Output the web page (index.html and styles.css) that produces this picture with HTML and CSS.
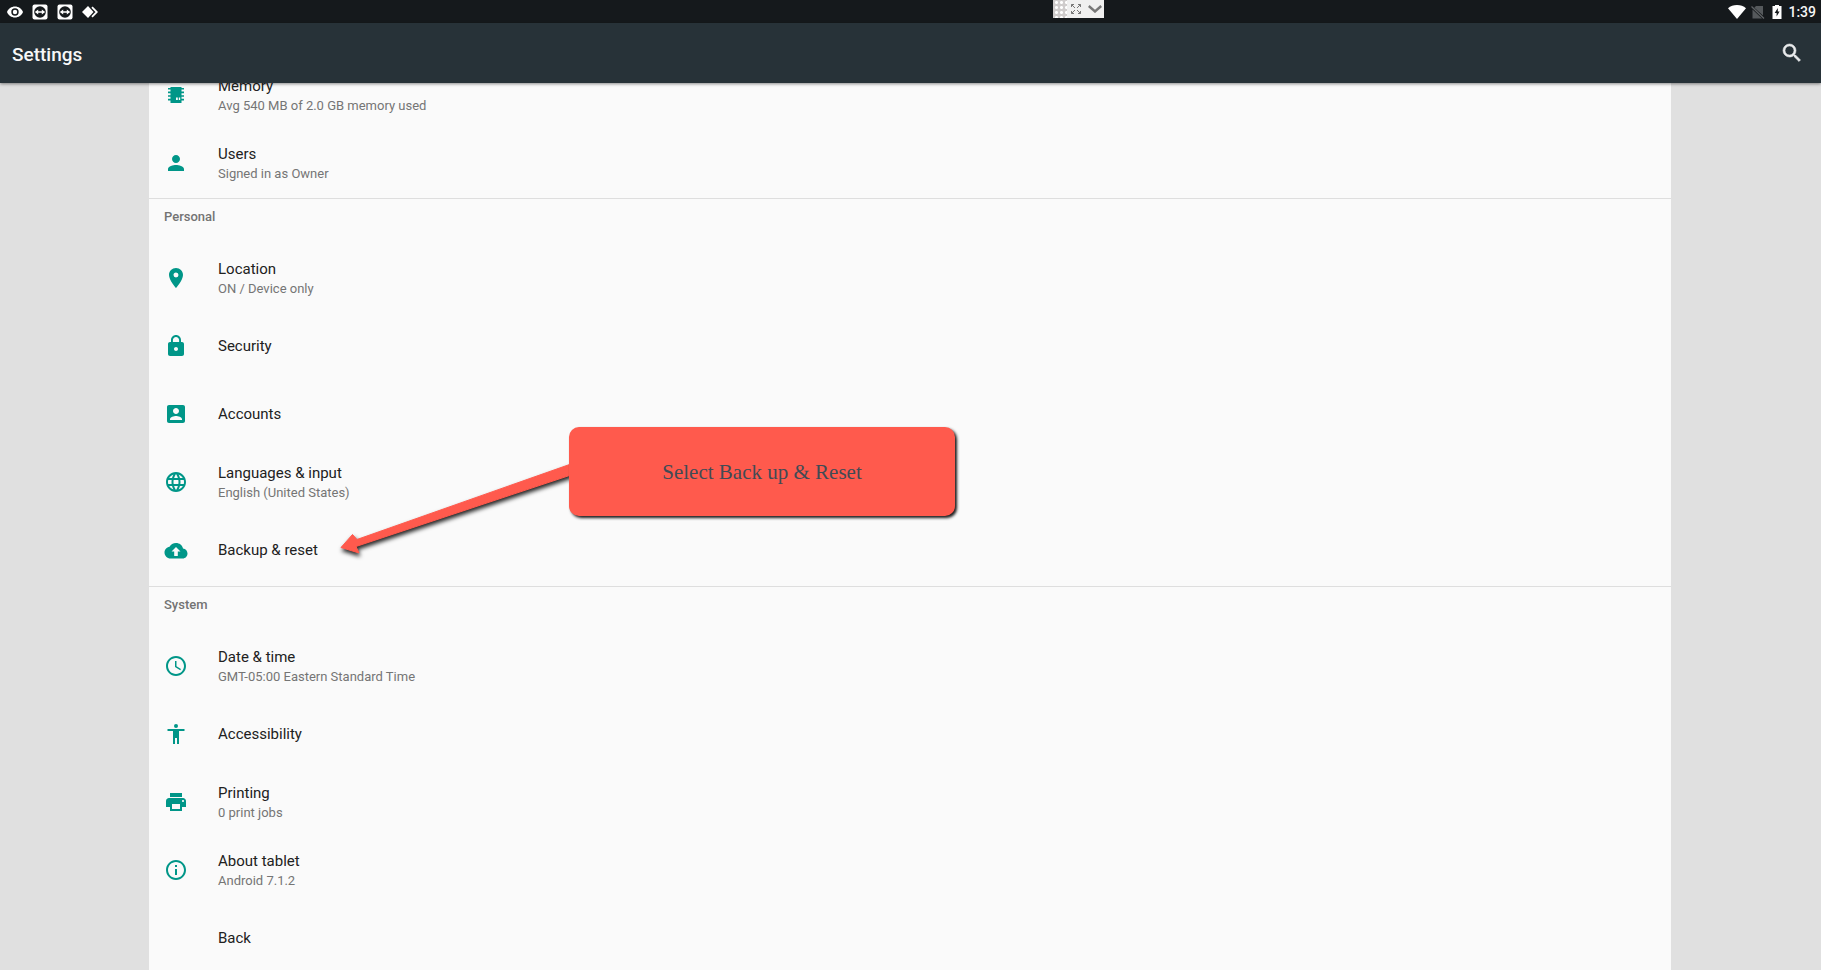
FILE: index.html
```html
<!DOCTYPE html>
<html lang="en">
<head>
<meta charset="utf-8">
<title>Settings</title>
<link rel="stylesheet" href="styles.css">
</head>
<body>
<div class="screen">
  <div class="status-bar">
    <div class="status-group notifications">
      <svg class="status-icon" viewBox="0 0 16 16"><path fill="#fff" fill-rule="evenodd" d="M8 2.5C4.4 2.5 1.3 4.700 0 8c1.300 3.300 4.400 5.500 8 5.500s6.700-2.200 8-5.500c-1.300-3.300-4.400-5.500-8-5.500zm0 9.200a3.700 3.700 0 1 1 0-7.400 3.700 3.700 0 0 1 0 7.400z"/><circle cx="8" cy="8" r="2.200" fill="#fff"/></svg>
      <svg class="status-icon" viewBox="0 0 16 16"><rect x=".5" y=".5" width="15" height="15" rx="2" fill="#fff"/><circle cx="8" cy="8" r="5.800" fill="#15191c"/><path fill="#fff" d="M2.800 8l3.400-2.600v1.800h3.600V5.400L13.200 8l-3.400 2.600V8.800H6.200v1.800z"/></svg>
      <svg class="status-icon" viewBox="0 0 16 16"><rect x=".5" y=".5" width="15" height="15" rx="2" fill="#fff"/><circle cx="8" cy="8" r="5.800" fill="#15191c"/><path fill="#fff" d="M2.800 8l3.400-2.600v1.800h3.600V5.400L13.200 8l-3.400 2.600V8.800H6.200v1.800z"/></svg>
      <svg class="status-icon" viewBox="0 0 16 16"><path fill="#fff" d="M6 2l5.500 6L6 14 0 8z"/><path fill="none" stroke="#fff" stroke-width="1.800" d="M10 3.200L14.800 8 10 12.800"/></svg>
    </div>
    <div class="status-group">
      <svg class="wifi" viewBox="0 0 18 14"><path fill="#fff" d="M9 14L0 3.200C2.400 1.200 5.500 0 9 0s6.600 1.200 9 3.200z"/></svg>
      <svg class="sim" viewBox="0 0 14 14"><path fill="#55595c" d="M5 1h7v9.500L3.300 2.700zM1.500 4.500L11 13.500H1.500z"/><path stroke="#606366" stroke-width="1.300" d="M.5 1.500l12.500 12"/></svg>
      <svg class="battery" viewBox="0 0 10 14"><path fill="#fff" d="M3 0h4v1h2.500v13H.5V1H3z"/><path fill="#15191c" d="M5.800 3L2.700 8h1.900v3.500l3-5H5.800z"/></svg>
      <time class="clock">1:39</time>
    </div>
    <div class="viewer-bar">
      <span class="grip"></span>
      <button class="viewer-button" aria-label="Full screen"><svg viewBox="0 0 10 10" width="10" height="10"><path fill="none" stroke="#777" d="M.5 3V.5H3M.5.5L4 4M7 .5h2.500V3M9.500.5L6 4M.5 7v2.500H3M.5 9.500L4 6M7 9.500h2.500V7M9.500 9.500L6 6"/></svg></button>
      <button class="viewer-button" aria-label="Expand"><svg viewBox="0 0 14 8" width="14" height="8"><path fill="none" stroke="#777" stroke-width="2.400" d="M.8 1L7 6.500 13.200 1"/></svg></button>
    </div>
  </div>

  <header class="app-bar">
    <h1 class="app-title">Settings</h1>
    <button class="search" aria-label="Search"><svg class="icon" viewBox="0 0 24 24"><path fill="#e9ebec" stroke="#e9ebec" stroke-width=".6" d="M15.500 14h-.79l-.28-.27A6.470 6.470 0 0 0 16 9.500 6.500 6.500 0 1 0 9.500 16c1.610 0 3.090-.59 4.230-1.570l.27.28v.79l5 4.990L20.490 19l-4.990-5zm-6 0C7.010 14 5 11.990 5 9.500S7.010 5 9.500 5 14 7.010 14 9.500 11.990 14 9.500 14z"/></svg></button>
  </header>

  <main class="content">
    <div class="list">
      <section class="section scrolled">
        <a class="row" href="#memory">
          <svg class="icon" viewBox="0 0 24 24"><path fill-rule="evenodd" d="M6.500 4h11v1H20v1.600h-2.500v2H20v1.600h-2.500v2H20v1.600h-2.500v2H20v1.600h-2.500V20h-11v-2.600H4v-1.600h2.500v-2H4v-1.600h2.500v-2H4V8.600h2.500v-2H4V5h2.500zM12 14.500v2.500h1.800v-2.500zm2.800 0v2.500h1.400v-2.500z"/></svg>
          <span class="label"><span class="title">Memory</span><span class="summary">Avg 540 MB of 2.0 GB memory used</span></span>
        </a>
        <a class="row" href="#users">
          <svg class="icon" viewBox="0 0 24 24"><path d="M12 12c2.210 0 4-1.790 4-4s-1.790-4-4-4-4 1.790-4 4 1.790 4 4 4zm0 2c-2.670 0-8 1.340-8 4v2h16v-2c0-2.660-5.330-4-8-4z"/></svg>
          <span class="label"><span class="title">Users</span><span class="summary">Signed in as Owner</span></span>
        </a>
      </section>

      <section class="section">
        <h2 class="section-title">Personal</h2>
        <a class="row" href="#location">
          <svg class="icon" viewBox="0 0 24 24"><path d="M12 2C8.130 2 5 5.130 5 9c0 5.250 7 13 7 13s7-7.750 7-13c0-3.870-3.130-7-7-7zm0 9.500a2.500 2.500 0 0 1 0-5 2.500 2.500 0 0 1 0 5z"/></svg>
          <span class="label"><span class="title">Location</span><span class="summary">ON / Device only</span></span>
        </a>
        <a class="row" href="#security">
          <svg class="icon" viewBox="0 0 24 24"><path d="M18 8h-1V6c0-2.760-2.240-5-5-5S7 3.240 7 6v2H6c-1.100 0-2 .9-2 2v10c0 1.100.9 2 2 2h12c1.100 0 2-.9 2-2V10c0-1.100-.9-2-2-2zm-6 9c-1.100 0-2-.9-2-2s.9-2 2-2 2 .9 2 2-.9 2-2 2zm3.100-9H8.900V6c0-1.710 1.390-3.100 3.100-3.100s3.100 1.390 3.100 3.100v2z"/></svg>
          <span class="label"><span class="title">Security</span></span>
        </a>
        <a class="row" href="#accounts">
          <svg class="icon" viewBox="0 0 24 24"><path d="M3 5v14c0 1.100.89 2 2 2h14c1.100 0 2-.9 2-2V5c0-1.100-.9-2-2-2H5c-1.110 0-2 .9-2 2zm12 4c0 1.660-1.340 3-3 3s-3-1.340-3-3 1.340-3 3-3 3 1.340 3 3zm-9 8c0-2 4-3.100 6-3.100s6 1.100 6 3.100v1H6v-1z"/></svg>
          <span class="label"><span class="title">Accounts</span></span>
        </a>
        <a class="row" href="#languages">
          <svg class="icon" viewBox="0 0 24 24"><path d="M11.990 2C6.470 2 2 6.480 2 12s4.470 10 9.990 10C17.520 22 22 17.520 22 12S17.520 2 11.990 2zm6.930 6h-2.950a15.650 15.650 0 0 0-1.380-3.560A8.030 8.030 0 0 1 18.920 8zM12 4.040c.83 1.200 1.480 2.530 1.910 3.960h-3.820c.43-1.430 1.080-2.760 1.910-3.960zM4.260 14C4.100 13.360 4 12.690 4 12s.1-1.360.26-2h3.380c-.08.66-.14 1.320-.14 2s.06 1.340.14 2H4.260zm.82 2h2.950c.32 1.250.78 2.450 1.380 3.560A7.987 7.987 0 0 1 5.080 16zm2.950-8H5.080a7.987 7.987 0 0 1 4.330-3.560A15.650 15.650 0 0 0 8.030 8zM12 19.960c-.83-1.200-1.480-2.530-1.910-3.960h3.820c-.43 1.430-1.080 2.760-1.910 3.960zM14.340 14H9.660c-.09-.66-.16-1.320-.16-2s.07-1.350.16-2h4.680c.09.65.16 1.320.16 2s-.07 1.340-.16 2zm.25 5.560c.6-1.110 1.060-2.310 1.380-3.560h2.950a8.030 8.030 0 0 1-4.330 3.560zM16.360 14c.08-.66.14-1.320.14-2s-.06-1.340-.14-2h3.380c.16.640.26 1.310.26 2s-.1 1.360-.26 2h-3.380z"/></svg>
          <span class="label"><span class="title">Languages &amp; input</span><span class="summary">English (United States)</span></span>
        </a>
        <a class="row" href="#backup">
          <svg class="icon" viewBox="0 0 24 24"><path fill-rule="evenodd" d="M19 10.500C18.300 7.200 15.500 5 12 5 9.200 5 6.700 6.500 5.500 8.800 2.700 9.200.5 11.700.5 14.600c0 3.300 2.700 6 6 6h12.200c2.700 0 4.800-2.200 4.800-5 0-2.700-2-4.900-4.500-5.100zM13.800 13.500V18h-3.600v-4.500H7.500L12 9l4.500 4.500z"/></svg>
          <span class="label"><span class="title">Backup &amp; reset</span></span>
        </a>
      </section>

      <section class="section">
        <h2 class="section-title">System</h2>
        <a class="row" href="#date">
          <svg class="icon" viewBox="0 0 24 24"><path d="M11.990 2C6.470 2 2 6.480 2 12s4.470 10 9.990 10C17.520 22 22 17.520 22 12S17.520 2 11.990 2zM12 20c-4.420 0-8-3.580-8-8s3.580-8 8-8 8 3.580 8 8-3.580 8-8 8zm.5-13H11v6l5.250 3.150.75-1.230-4.500-2.670z"/></svg>
          <span class="label"><span class="title">Date &amp; time</span><span class="summary">GMT-05:00 Eastern Standard Time</span></span>
        </a>
        <a class="row" href="#accessibility">
          <svg class="icon" viewBox="0 0 24 24"><path d="M12 2a2 2 0 1 1 0 4 2 2 0 0 1 0-4zm8.500 7H15v13h-2v-6h-2v6H9V9H3.500V7h17z"/></svg>
          <span class="label"><span class="title">Accessibility</span></span>
        </a>
        <a class="row" href="#printing">
          <svg class="icon" viewBox="0 0 24 24"><path d="M19 8H5c-1.660 0-3 1.340-3 3v6h4v4h12v-4h4v-6c0-1.660-1.340-3-3-3zm-3 11H8v-5h8v5zm3-7c-.55 0-1-.45-1-1s.45-1 1-1 1 .45 1 1-.45 1-1 1zm-1-9H6v4h12V3z"/></svg>
          <span class="label"><span class="title">Printing</span><span class="summary">0 print jobs</span></span>
        </a>
        <a class="row" href="#about">
          <svg class="icon" viewBox="0 0 24 24"><path d="M11 17h2v-6h-2v6zm1-15C6.480 2 2 6.480 2 12s4.480 10 10 10 10-4.480 10-10S17.520 2 12 2zm0 18c-4.410 0-8-3.590-8-8s3.590-8 8-8 8 3.590 8 8-3.590 8-8 8zM11 9h2V7h-2v2z"/></svg>
          <span class="label"><span class="title">About tablet</span><span class="summary">Android 7.1.2</span></span>
        </a>
        <a class="row" href="#back">
          <span class="icon"></span>
          <span class="label"><span class="title">Back</span></span>
        </a>
      </section>
    </div>
  </main>

  <div class="annotation">
    <svg class="arrow" viewBox="0 0 232 132"><path fill="#ff5a4d" stroke="#ff5a4d" stroke-linejoin="round" d="M2 120.500L13.500 107.500 18 112.500 232 37V48L17 119.500 20 126z"/></svg>
    <p class="callout">Select Back up &amp; Reset</p>
  </div>
</div>
</body>
</html>
```
FILE: styles.css
```css
* {
  box-sizing: border-box;
}

body {
  margin: 0;
  background: #e0e0e0;
  font-family: Roboto, "Noto Sans", sans-serif;
  color: #212121;
}

h1,
h2,
p {
  margin: 0;
}

button {
  display: flex;
  align-items: center;
  justify-content: center;
  padding: 0;
  border: 0;
  background: none;
}

.screen {
  position: relative;
  display: flex;
  flex-direction: column;
  height: 100vh;
  overflow: hidden;
}

.status-bar {
  position: relative;
  display: flex;
  flex: none;
  justify-content: space-between;
  height: 23px;
  padding: 0 5px 0 7px;
  background: #15191c;
}

.status-group {
  display: flex;
  align-items: center;
}

.notifications {
  gap: 9px;
}

.status-icon {
  width: 16px;
  height: 16px;
}

.wifi {
  width: 18px;
  height: 14px;
  margin-right: 5px;
}

.sim {
  width: 14px;
  height: 14px;
  margin-right: 7px;
}

.battery {
  width: 10px;
  height: 14px;
  margin-right: 6px;
}

.clock {
  color: #f5f5f5;
  font-size: 14px;
  font-weight: 500;
  line-height: 22px;
}

.viewer-bar {
  position: absolute;
  top: 0;
  left: 1053px;
  display: flex;
  width: 51px;
  height: 18px;
  background: #f0f0f0;
}

.grip {
  width: 14px;
  background: radial-gradient(circle, #fff 1px, #cfcccc 2px) 1px 0 / 5px 5px;
}

.viewer-button {
  flex: 1;
}

.app-bar {
  z-index: 1;
  display: flex;
  flex: none;
  align-items: center;
  justify-content: space-between;
  height: 60px;
  padding: 0 17px 0 12px;
  background: #273238;
  box-shadow: 0 1px 3px rgba(0, 0, 0, 0.45);
}

.app-title {
  padding-top: 3px;
  color: #f7f8f8;
  font-size: 19px;
  font-weight: 500;
  line-height: 24px;
}

.content {
  flex: 1;
  min-height: 0;
  padding: 0 150px 0 149px;
  overflow: hidden;
}

.list {
  background: #fafafa;
}

.section {
  padding-bottom: 2px;
  border-top: 1px solid #dedede;
}

.scrolled {
  margin-top: -22px;
  padding-bottom: 1px;
  border-top: 0;
}

.section-title {
  height: 45px;
  padding: 8px 15px;
  color: #737373;
  font-size: 13px;
  font-weight: 500;
  line-height: 20px;
}

.row {
  display: flex;
  align-items: center;
  gap: 30px;
  height: 68px;
  padding: 0 15px;
  color: inherit;
  text-decoration: none;
}

.icon {
  flex: none;
  width: 24px;
  height: 24px;
  fill: #009688;
}

.label {
  display: flex;
  flex-direction: column;
}

.title {
  font-size: 15px;
  line-height: 20px;
}

.summary {
  color: #757575;
  font-size: 13px;
  line-height: 19px;
}

.annotation {
  position: absolute;
  top: 427px;
  left: 339px;
  display: flex;
}

.arrow {
  width: 232px;
  height: 132px;
  margin-right: -2px;
  filter: drop-shadow(1px 3px 2px rgba(0, 0, 0, 0.85));
}

.callout {
  z-index: 1;
  display: flex;
  align-items: center;
  justify-content: center;
  width: 386px;
  height: 89px;
  border-radius: 10px;
  background: #ff5a4d;
  box-shadow: 2px 2px 3px rgba(0, 0, 0, 0.9);
  color: #414b55;
  font-family: "Liberation Serif", serif;
  font-size: 21px;
  line-height: 24px;
}
```
